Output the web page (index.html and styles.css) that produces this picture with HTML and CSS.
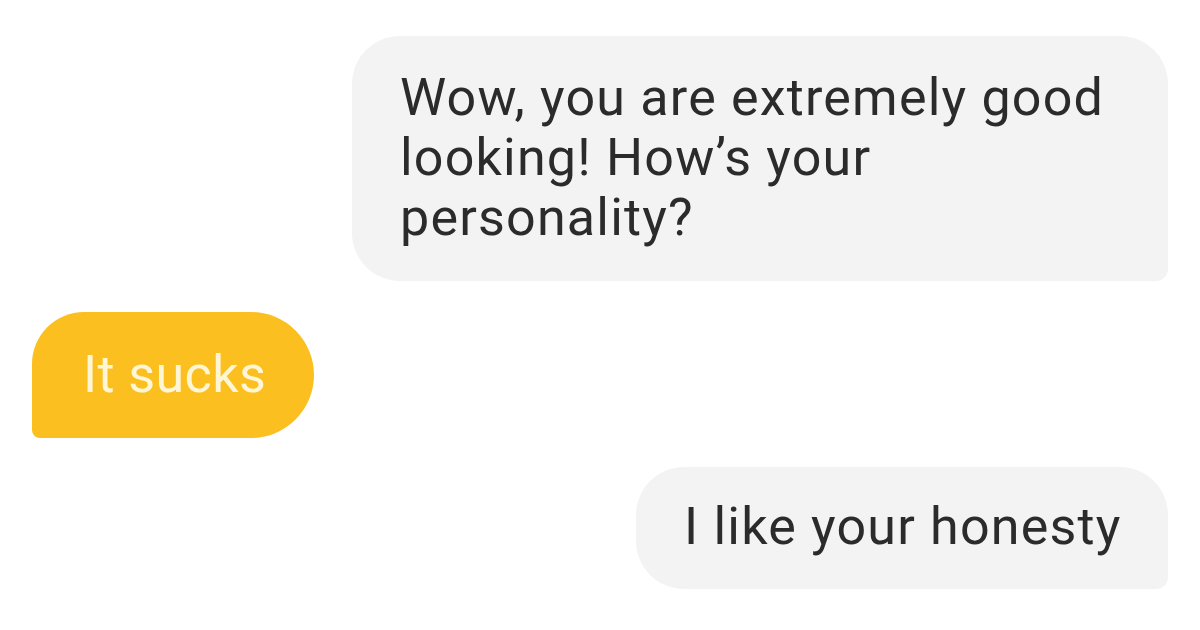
FILE: index.html
```html
<!DOCTYPE html>
<html lang="en">

<head>
  <meta charset="UTF-8">
  <meta name="viewport" content="width=device-width, initial-scale=1.0">
  <title>Chat</title>
  <link rel="stylesheet" href="styles.css">
</head>

<body>
  <div class="chat">
    <div class="msg msg-out msg-long">Wow, you are extremely good looking! How’s your personality?</div>
    <div class="msg msg-in">It sucks</div>
    <div class="msg msg-out msg-short">I like your honesty</div>
  </div>
</body>

</html>
```

FILE: styles.css
```css
body {
  margin: 0;
  padding: 0;
  background-color: #fff;
  font-family: Roboto, "Liberation Sans", sans-serif;
}
.chat {
  width: 1200px;
  height: 630px;
  box-sizing: border-box;
  padding: 36px 32px 0;
  display: flex;
  flex-direction: column;
  overflow: hidden;
}
.msg {
  box-sizing: border-box;
  font-size: 52px;
  line-height: 60px;
  letter-spacing: 1.2px;
}
.msg-out {
  align-self: flex-end;
  background-color: #f3f3f3;
  color: #2b2b2b;
  border-radius: 48px 48px 12px 48px;
}
.msg-long {
  width: 816px;
  padding: 32px 48px 33px 48px;
}
.msg-in {
  align-self: flex-start;
  margin-top: 31px;
  width: 282px;
  height: 126px;
  padding: 33px 0 0 51px;
  background-color: #fbbf1f;
  color: #fff6d6;
  letter-spacing: 0.4px;
  border-radius: 52px 63px 63px 8px;
}
.msg-short {
  margin-top: 29px;
  width: 532px;
  height: 122px;
  padding: 30px 0 0 48px;
}
```
